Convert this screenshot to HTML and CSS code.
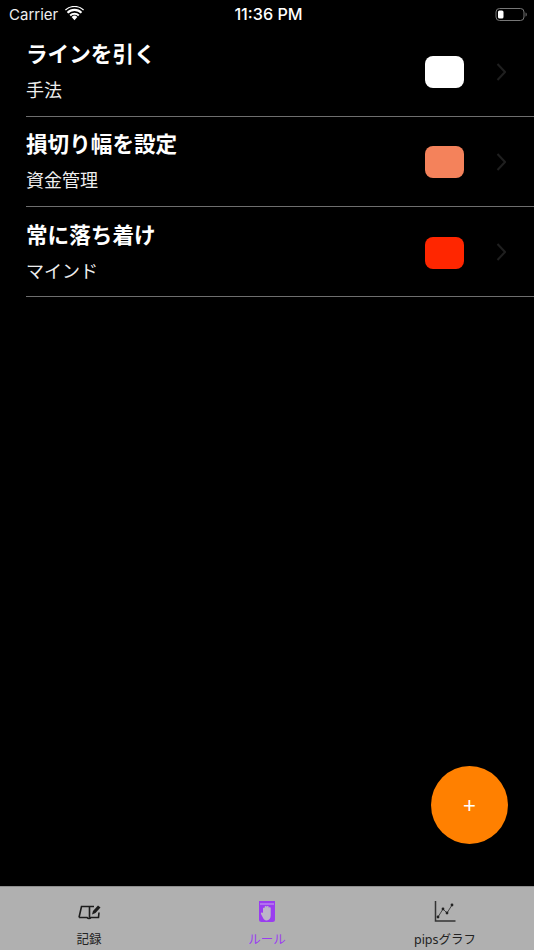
FILE: index.html
```html
<!DOCTYPE html>
<html lang="ja">
<head>
<meta charset="utf-8">
<title>ルール</title>
<link rel="stylesheet" href="styles.css">
</head>
<body>
<div class="app">
  <header class="status">
    <div class="status-left">
      <span class="carrier">Carrier</span>
      <svg class="wifi" viewBox="0 0 20 15" width="19" height="15"><path d="M10 14.500l-3-3.400a4.300 4.300 0 0 1 6 0z" fill="#fff"/><path d="M4.700 8.800a7.600 7.600 0 0 1 10.600 0l-1.500 1.600a5.500 5.500 0 0 0-7.600 0z" fill="#fff"/><path d="M1.900 5.800a11.600 11.600 0 0 1 16.200 0l-1.500 1.700a9.400 9.400 0 0 0-13.200 0z" fill="#fff"/><path d="M0 3.400a14.600 14.600 0 0 1 20 0l-.9 1a13.200 13.200 0 0 0-18.200 0z" fill="#fff"/></svg>
    </div>
    <div class="clock">11:36 PM</div>
    <div class="status-right">
      <svg viewBox="0 0 33 15" width="33" height="15"><rect x="1" y="1.500" width="28" height="12" rx="3.500" fill="none" stroke="#777" stroke-width="1"/><rect x="3" y="3.500" width="5.500" height="8" rx="1.500" fill="#fff"/><path d="M30.500 5.500c1 .4 1.300 1.100 1.300 2s-.3 1.600-1.300 2z" fill="#666"/></svg>
    </div>
  </header>

  <main class="list">
    <div class="row">
      <div class="texts"><div class="title">ラインを引く</div><div class="sub">手法</div></div>
      <div class="swatch swatch-white"></div>
      <svg class="chev" viewBox="0 0 10 18" width="10" height="18"><path d="M1.500 1l7.500 8-7.500 8" fill="none" stroke="#1f1f1f" stroke-width="2"/></svg>
    </div>
    <div class="row">
      <div class="texts"><div class="title">損切り幅を設定</div><div class="sub">資金管理</div></div>
      <div class="swatch swatch-salmon"></div>
      <svg class="chev" viewBox="0 0 10 18" width="10" height="18"><path d="M1.500 1l7.500 8-7.500 8" fill="none" stroke="#1f1f1f" stroke-width="2"/></svg>
    </div>
    <div class="row">
      <div class="texts"><div class="title">常に落ち着け</div><div class="sub">マインド</div></div>
      <div class="swatch swatch-red"></div>
      <svg class="chev" viewBox="0 0 10 18" width="10" height="18"><path d="M1.500 1l7.500 8-7.500 8" fill="none" stroke="#1f1f1f" stroke-width="2"/></svg>
    </div>
  </main>

  <button class="fab">+</button>

  <nav class="tabs">
    <div class="tab">
      <svg class="tab-icon" viewBox="0 0 24 24" width="24" height="24"><path d="M2 17.500L4.500 6.500H12.500V17.500M2 17.500H10C11 18.800 13 18.800 14 17.500H21.500L22 12.500M12.500 6.500H17" fill="none" stroke="#1c1c1c" stroke-width="1.600"/><path d="M15 14.500l1-3.500 5-5.500 2.500 2-5 5.500z" fill="#1c1c1c"/></svg>
      <span class="tab-label">記録</span>
    </div>
    <div class="tab tab-active">
      <svg class="tab-icon" viewBox="0 0 24 24" width="24" height="24"><path d="M4 1H20V19.500Q20 22 17.500 22H6.500Q4 22 4 19.500z" fill="#9a3df0"/><path d="M5 4H19" stroke="#c9a5ee" stroke-width="1"/><path d="M8 12.500V8.500a1 1 0 0 1 1.700-.6V7a1 1 0 0 1 2 0 1 1 0 0 1 2 0v1a1 1 0 0 1 2 .3v7.200c0 2.800-1.500 5-4 5-2.200 0-3.200-1.400-4-3.200L6 14c-.4-1.200.9-1.900 1.500-1z" fill="#bdb6c8"/></svg>
      <span class="tab-label">ルール</span>
    </div>
    <div class="tab">
      <svg class="tab-icon" viewBox="0 0 24 24" width="24" height="24"><path d="M2.500 1V21H22.500" fill="none" stroke="#333" stroke-width="1.500"/><path d="M5 17l5-8 4 4 5-8" fill="none" stroke="#444" stroke-width="1"/><circle cx="5" cy="17" r="1.400" fill="#222"/><circle cx="10" cy="9" r="1.400" fill="#222"/><circle cx="14" cy="13" r="1.400" fill="#222"/><circle cx="19" cy="5" r="1.400" fill="#222"/></svg>
      <span class="tab-label">pipsグラフ</span>
    </div>
  </nav>
</div>
</body>
</html>
```

FILE: styles.css
```css
* { box-sizing: border-box; }
html, body { margin: 0; padding: 0; background: #000; }
body { font-family: "Liberation Sans", "Noto Sans CJK JP", sans-serif; }

.app {
  width: 534px;
  height: 950px;
  background: #000;
  color: #fff;
  display: flex;
  flex-direction: column;
  position: relative;
  overflow: hidden;
}

.status {
  height: 26.500px;
  flex: none;
  display: grid;
  grid-template-columns: 1fr auto 1fr;
  align-items: center;
  padding: 2px 6px 0 9px;
}
.status-left { display: flex; align-items: center; gap: 7px; }
.carrier { font-size: 15px; font-family: "Inter", "Liberation Sans", sans-serif; color: #eee; }
.wifi { position: relative; top: -1px; }
.clock { font-family: "Inter", "Liberation Sans", sans-serif; font-size: 16.200px; font-weight: 500; }
.status-right { display: flex; justify-content: flex-end; }

.list { flex: 1; padding-left: 26px; }

.row {
  height: 90.300px;
  display: flex;
  align-items: center;
  border-bottom: 1px solid #6e6e6e;
}
.texts { flex: 1; padding-top: 2px; font-family: "Noto Sans CJK JP", sans-serif; }
.title { font-size: 21.600px; font-weight: 700; line-height: 30px; margin-top: -4px; }
.sub { font-size: 18px; line-height: 26px; margin-top: 8px; color: #eee; }

.swatch { width: 39px; height: 32px; border-radius: 8px; margin-top: 2px; }
.swatch-white { background: #fff; }
.swatch-salmon { background: #f4825b; }
.swatch-red { background: #ff2600; }

.chev { margin: 1px 28px 0 32px; flex: none; }

.fab {
  position: absolute;
  left: 431px;
  top: 766px;
  width: 77px;
  height: 78px;
  border: 0;
  border-radius: 50%;
  background: #ff8000;
  color: #fff;
  font-family: "Liberation Sans", sans-serif;
  font-size: 22px;
  padding: 2px 0 0;
}

.tabs {
  flex: none;
  height: 64px;
  background: #b0b0b0;
  border-top: 1px solid #8e8e8e;
  display: grid;
  grid-template-columns: repeat(3, 1fr);
}
.tab {
  display: flex;
  flex-direction: column;
  align-items: center;
  padding-top: 13px;
  color: #222;
}
.tab-active { color: #9a3df0; }
.tab-icon { display: block; }
.tab-label {
  font-size: 12.500px;
  line-height: 16px;
  margin-top: 8px;
  font-family: "Noto Sans", "Noto Sans CJK JP", sans-serif;
}
```
